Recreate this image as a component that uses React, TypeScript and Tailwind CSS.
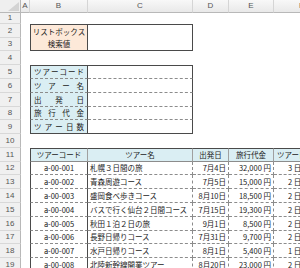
import React from "react";

const H: Record<number, string> = {
  11: "h-[11px]",
  13: "h-[13px]",
  14: "h-[14px]",
};

const rowHeights: [number, number][] = [
  [1, 11],
  [2, 14],
  [3, 13],
  [4, 14],
  [5, 14],
  [6, 14],
  [7, 14],
  [8, 13],
  [9, 14],
  [10, 14],
  [11, 14],
  [12, 13],
  [13, 14],
  [14, 14],
  [15, 14],
  [16, 14],
  [17, 13],
  [18, 14],
  [19, 14],
];

const jp = "[font-family:'Noto_Sans_CJK_JP','Noto_Sans_CJK_SC',sans-serif]";

const tours = [
  { code: "a-00-001", name: "札幌３日間の旅", date: "7月4日", price: "32,000 円", days: "3 日", h: 13 },
  { code: "a-00-002", name: "青森周遊コース", date: "7月5日", price: "15,000 円", days: "2 日", h: 14 },
  { code: "a-00-003", name: "盛岡食べ歩きコース", date: "8月10日", price: "18,500 円", days: "2 日", h: 14 },
  { code: "a-00-004", name: "バスで行く仙台２日間コース", date: "7月15日", price: "19,300 円", days: "2 日", h: 14 },
  { code: "a-00-005", name: "秋田１泊２日の旅", date: "9月1日", price: "8,500 円", days: "2 日", h: 14 },
  { code: "a-00-006", name: "長野日帰りコース", date: "7月31日", price: "9,700 円", days: "2 日", h: 13 },
  { code: "a-00-007", name: "水戸日帰りコース", date: "8月1日", price: "5,400 円", days: "1 日", h: 14 },
  { code: "a-00-008", name: "北陸新幹線開業ツアー", date: "8月20日", price: "23,000 円", days: "2 日", h: 14 },
];

const labels = [
  { chars: ["ツ", "ア", "ー", "コ", "ー", "ド"], h: 14 },
  { chars: ["ツ", "ア", "ー", "名"], h: 14 },
  { chars: ["出", "発", "日"], h: 14 },
  { chars: ["旅", "行", "代", "金"], h: 13 },
  { chars: ["ツ", "ア", "ー", "日", "数"], h: 14 },
];

function ColHead({ w, label }: { w: string; label: string }) {
  return (
    <div
      className={`${w} shrink-0 h-full flex items-center justify-center border-r border-b border-r-[#d5d5d5] border-b-[#b8b8b8] bg-gradient-to-b from-[#f8f8f8] to-[#e9e9e9] text-[8px] text-[#555] [font-family:'Liberation_Sans',sans-serif]`}
    >
      {label}
    </div>
  );
}

export default function App() {
  return (
    <div className="w-[300px] h-[268px] overflow-hidden bg-white">
      <div className="w-[330px]">
        {/* column headers */}
        <div className="flex h-[13px]">
          <div className="w-[21px] shrink-0 h-full relative border-r border-b border-r-[#b8b8b8] border-b-[#b8b8b8] bg-[#efefef]">
            <svg className="absolute right-[1px] bottom-[1px]" width="11" height="9" viewBox="0 0 11 9">
              <polygon points="11,0 11,9 0,9" fill="#d3d3d3" />
            </svg>
          </div>
          <ColHead w="w-[9px]" label="A" />
          <ColHead w="w-[58px]" label="B" />
          <ColHead w="w-[105px]" label="C" />
          <ColHead w="w-[36px]" label="D" />
          <ColHead w="w-[45px]" label="E" />
          <ColHead w="w-[56px]" label="F" />
        </div>

        <div className="flex">
          {/* row headers */}
          <div className="w-[21px] shrink-0 flex flex-col">
            {rowHeights.map(([n, h]) => (
              <div
                key={n}
                className={`${H[h]} flex items-center justify-center border-r border-b border-r-[#b8b8b8] border-b-[#d8d8d8] bg-[#f0f0f0] text-[8px] text-[#555] [font-family:'Liberation_Sans',sans-serif]`}
              >
                {n}
              </div>
            ))}
          </div>
          {/* column A */}
          <div className="w-[9px] shrink-0" />

          {/* sheet body */}
          <div className={`flex flex-col text-[7.5px] text-[#1a1a1a] ${jp}`}>
            {/* row 1 */}
            <div className="h-[11px]" />

            {/* rows 2-3 */}
            <div className="flex h-[27px]">
              <div className="w-[58px] flex flex-col border border-[#4a4a4a] bg-[#fde9d9]">
                <div className="h-[13px] flex items-center justify-center leading-none">リストボックス</div>
                <div className="h-[12px] flex items-center justify-center leading-none">検索値</div>
              </div>
              <div className="w-[105px] border-t border-r border-b border-[#4a4a4a] bg-white" />
            </div>

            {/* row 4 */}
            <div className="h-[14px]" />

            {/* rows 5-9 */}
            {labels.map((l, i) => {
              const first = i === 0;
              const last = i === labels.length - 1;
              const tb = `${first ? "border-t border-t-[#4a4a4a]" : ""} ${
                last
                  ? "border-b border-b-[#4a4a4a]"
                  : "border-b border-b-[#8c8c8c] [border-bottom-style:dashed]"
              }`;
              return (
                <div key={i} className={`flex ${H[l.h]}`}>
                  <div
                    className={`w-[58px] flex items-center justify-between px-[3px] leading-none bg-[#daeef3] border-l border-r border-l-[#4a4a4a] border-r-[#4a4a4a] ${tb}`}
                  >
                    {l.chars.map((c, j) => (
                      <span key={j}>{c}</span>
                    ))}
                  </div>
                  <div className={`w-[105px] bg-white border-r border-r-[#4a4a4a] ${tb}`} />
                </div>
              );
            })}

            {/* row 10 */}
            <div className="h-[14px]" />

            {/* row 11 header */}
            <div className="flex h-[14px] bg-[#daeef3] leading-none">
              <div className="w-[58px] flex items-center justify-center border-l border-t border-r border-b border-l-[#4a4a4a] border-t-[#4a4a4a] border-r-[#a0a0a0] border-b-[#8c8c8c]">
                ツアーコード
              </div>
              <div className="w-[105px] flex items-center justify-center border-t border-r border-b border-t-[#4a4a4a] border-r-[#a0a0a0] border-b-[#8c8c8c]">
                ツアー名
              </div>
              <div className="w-[36px] flex items-center justify-center border-t border-r border-b border-t-[#4a4a4a] border-r-[#a0a0a0] border-b-[#8c8c8c]">
                出発日
              </div>
              <div className="w-[45px] flex items-center justify-center border-t border-r border-b border-t-[#4a4a4a] border-r-[#a0a0a0] border-b-[#8c8c8c]">
                旅行代金
              </div>
              <div className="w-[56px] flex items-center pl-[3px] border-t border-b border-t-[#4a4a4a] border-b-[#8c8c8c]">
                ツアー日数
              </div>
            </div>

            {/* rows 12-19 */}
            {tours.map((t) => (
              <div key={t.code} className={`flex ${H[t.h]} leading-none`}>
                <div className="w-[58px] flex items-center justify-center border-l border-r border-b border-l-[#4a4a4a] border-r-[#4a4a4a] border-b-[#8c8c8c] [border-bottom-style:dashed]">
                  {t.code}
                </div>
                <div className="w-[105px] flex items-center pl-[2px] whitespace-nowrap overflow-hidden border-r border-b border-r-[#8c8c8c] border-b-[#8c8c8c] [border-right-style:dashed] [border-bottom-style:dashed]">
                  {t.name}
                </div>
                <div className="w-[36px] flex items-center justify-end pr-[2px] border-r border-b border-r-[#8c8c8c] border-b-[#8c8c8c] [border-right-style:dashed] [border-bottom-style:dashed]">
                  {t.date}
                </div>
                <div className="w-[45px] flex items-center justify-end pr-[2px] border-r border-b border-r-[#8c8c8c] border-b-[#8c8c8c] [border-right-style:dashed] [border-bottom-style:dashed]">
                  {t.price}
                </div>
                <div className="w-[56px] flex items-center pl-[14px] border-b border-b-[#8c8c8c] [border-bottom-style:dashed]">
                  {t.days}
                </div>
              </div>
            ))}
          </div>
        </div>
      </div>
    </div>
  );
}
